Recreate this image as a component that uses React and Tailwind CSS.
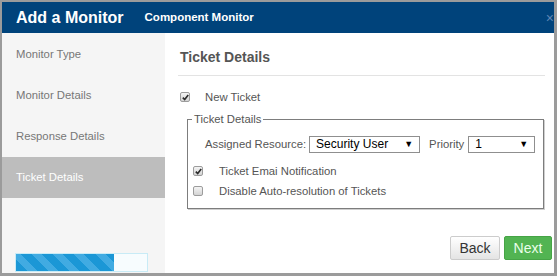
import React from "react";

const font = { fontFamily: '"Liberation Sans", Arial, sans-serif' };

function Box({ checked }) {
  return (
    <span className="inline-flex h-[10px] w-[10px] shrink-0 items-center justify-center rounded-[2px] border border-[#9c9c9c] bg-gradient-to-b from-[#f4f4f4] to-[#d4d4d4]">
      {checked && (
        <svg width="7" height="7" viewBox="0 0 7 7">
          <path d="M0.8 3.6 L2.7 5.6 L6.2 1.0" fill="none" stroke="#2b2b2b" strokeWidth="1.6" />
        </svg>
      )}
    </span>
  );
}

function Select({ value, width }) {
  return (
    <div
      className="flex h-[17px] items-center justify-between border border-[#8f8f8f] bg-white pl-[6px] pr-[6px] text-[12px] text-black"
      style={{ width }}
    >
      <span>{value}</span>
      <span className="text-[9px] leading-none">▼</span>
    </div>
  );
}

export default function App() {
  const items = ["Monitor Type", "Monitor Details", "Response Details", "Ticket Details"];
  return (
    <div style={font} className="flex h-[276px] w-[557px] flex-col bg-[#9b9b9b] pb-[3px] pl-[2px] pr-[3px] pt-[2px]">
      <div className="flex h-[31px] shrink-0 items-center bg-[#00437b] pl-[14px] text-white">
        <span className="text-[16px] font-bold">Add a Monitor</span>
        <span className="ml-[21px] text-[11.5px] font-bold">Component Monitor</span>
        <span className="ml-auto mr-[0px] text-[14px] leading-none text-[#5d86b3]">×</span>
      </div>
      <div className="flex min-h-0 flex-1">
        <div className="flex w-[163px] shrink-0 flex-col bg-[#f5f5f5] pt-[1px]">
          {items.map((t, i) => (
            <div
              key={t}
              className={
                "flex h-[41px] items-center pl-[14px] text-[11.3px] " +
                (i === 3 ? "bg-[#bdbdbd] text-white" : "text-[#777777]")
              }
            >
              {t}
            </div>
          ))}
          <div className="mb-[1px] ml-[13px] mt-auto h-[19px] w-[133px] border border-[#c8ebf6] bg-[#f7fcfe]">
            <div className="h-full w-[98px] bg-[repeating-linear-gradient(45deg,#1b97d6_0px,#1b97d6_8px,#41abe2_8px,#41abe2_15px)]" />
          </div>
        </div>
        <div className="flex flex-1 flex-col bg-white pl-[15px]">
          <div className="mt-[16px] text-[14px] font-bold leading-[16px] text-[#555555]">Ticket Details</div>
          <div className="ml-[-2px] mr-[9px] mt-[10px] h-px bg-[#e3e3e3]" />
          <div className="mt-[13px] flex items-center text-[11.3px] text-[#555555]">
            <Box checked />
            <span className="ml-[15px]">New Ticket</span>
          </div>
          <fieldset className="ml-[7px] mr-[10px] mt-[7px] border border-[#7d7d7d] px-[4px] pb-[8px] shadow-[1px_1px_0_#cfcfcf]">
            <legend className="px-[2px] text-[11.3px] leading-[13px] text-[#555555]">Ticket Details</legend>
            <div className="ml-[13px] mt-[10px] flex items-center text-[11.3px] text-[#555555]">
              <span>Assigned Resource:</span>
              <div className="ml-[3px]">
                <Select value="Security User" width={111} />
              </div>
              <span className="ml-[9px]">Priority</span>
              <div className="ml-[4px]">
                <Select value="1" width={67} />
              </div>
            </div>
            <div className="ml-[1px] mt-[10px] flex items-center text-[11.3px] text-[#555555]">
              <Box checked />
              <span className="ml-[16px]">Ticket Emai Notification</span>
            </div>
            <div className="ml-[1px] mt-[3px] flex items-center text-[11.3px] text-[#555555]">
              <Box />
              <span className="ml-[16px]">Disable Auto-resolution of Tickets</span>
            </div>
          </fieldset>
          <div className="mb-[13px] mr-[2px] mt-auto flex justify-end gap-[4px]">
            <button className="flex h-[24px] w-[50px] items-center justify-center rounded-[2px] border border-[#cccccc] bg-gradient-to-b from-white to-[#e4e4e4] text-[14px] text-[#333333]">
              Back
            </button>
            <button className="flex h-[24px] w-[48px] items-center justify-center rounded-[2px] border border-[#46a446] bg-[#52b452] text-[14px] text-[#eaffea]">
              Next
            </button>
          </div>
        </div>
      </div>
    </div>
  );
}
